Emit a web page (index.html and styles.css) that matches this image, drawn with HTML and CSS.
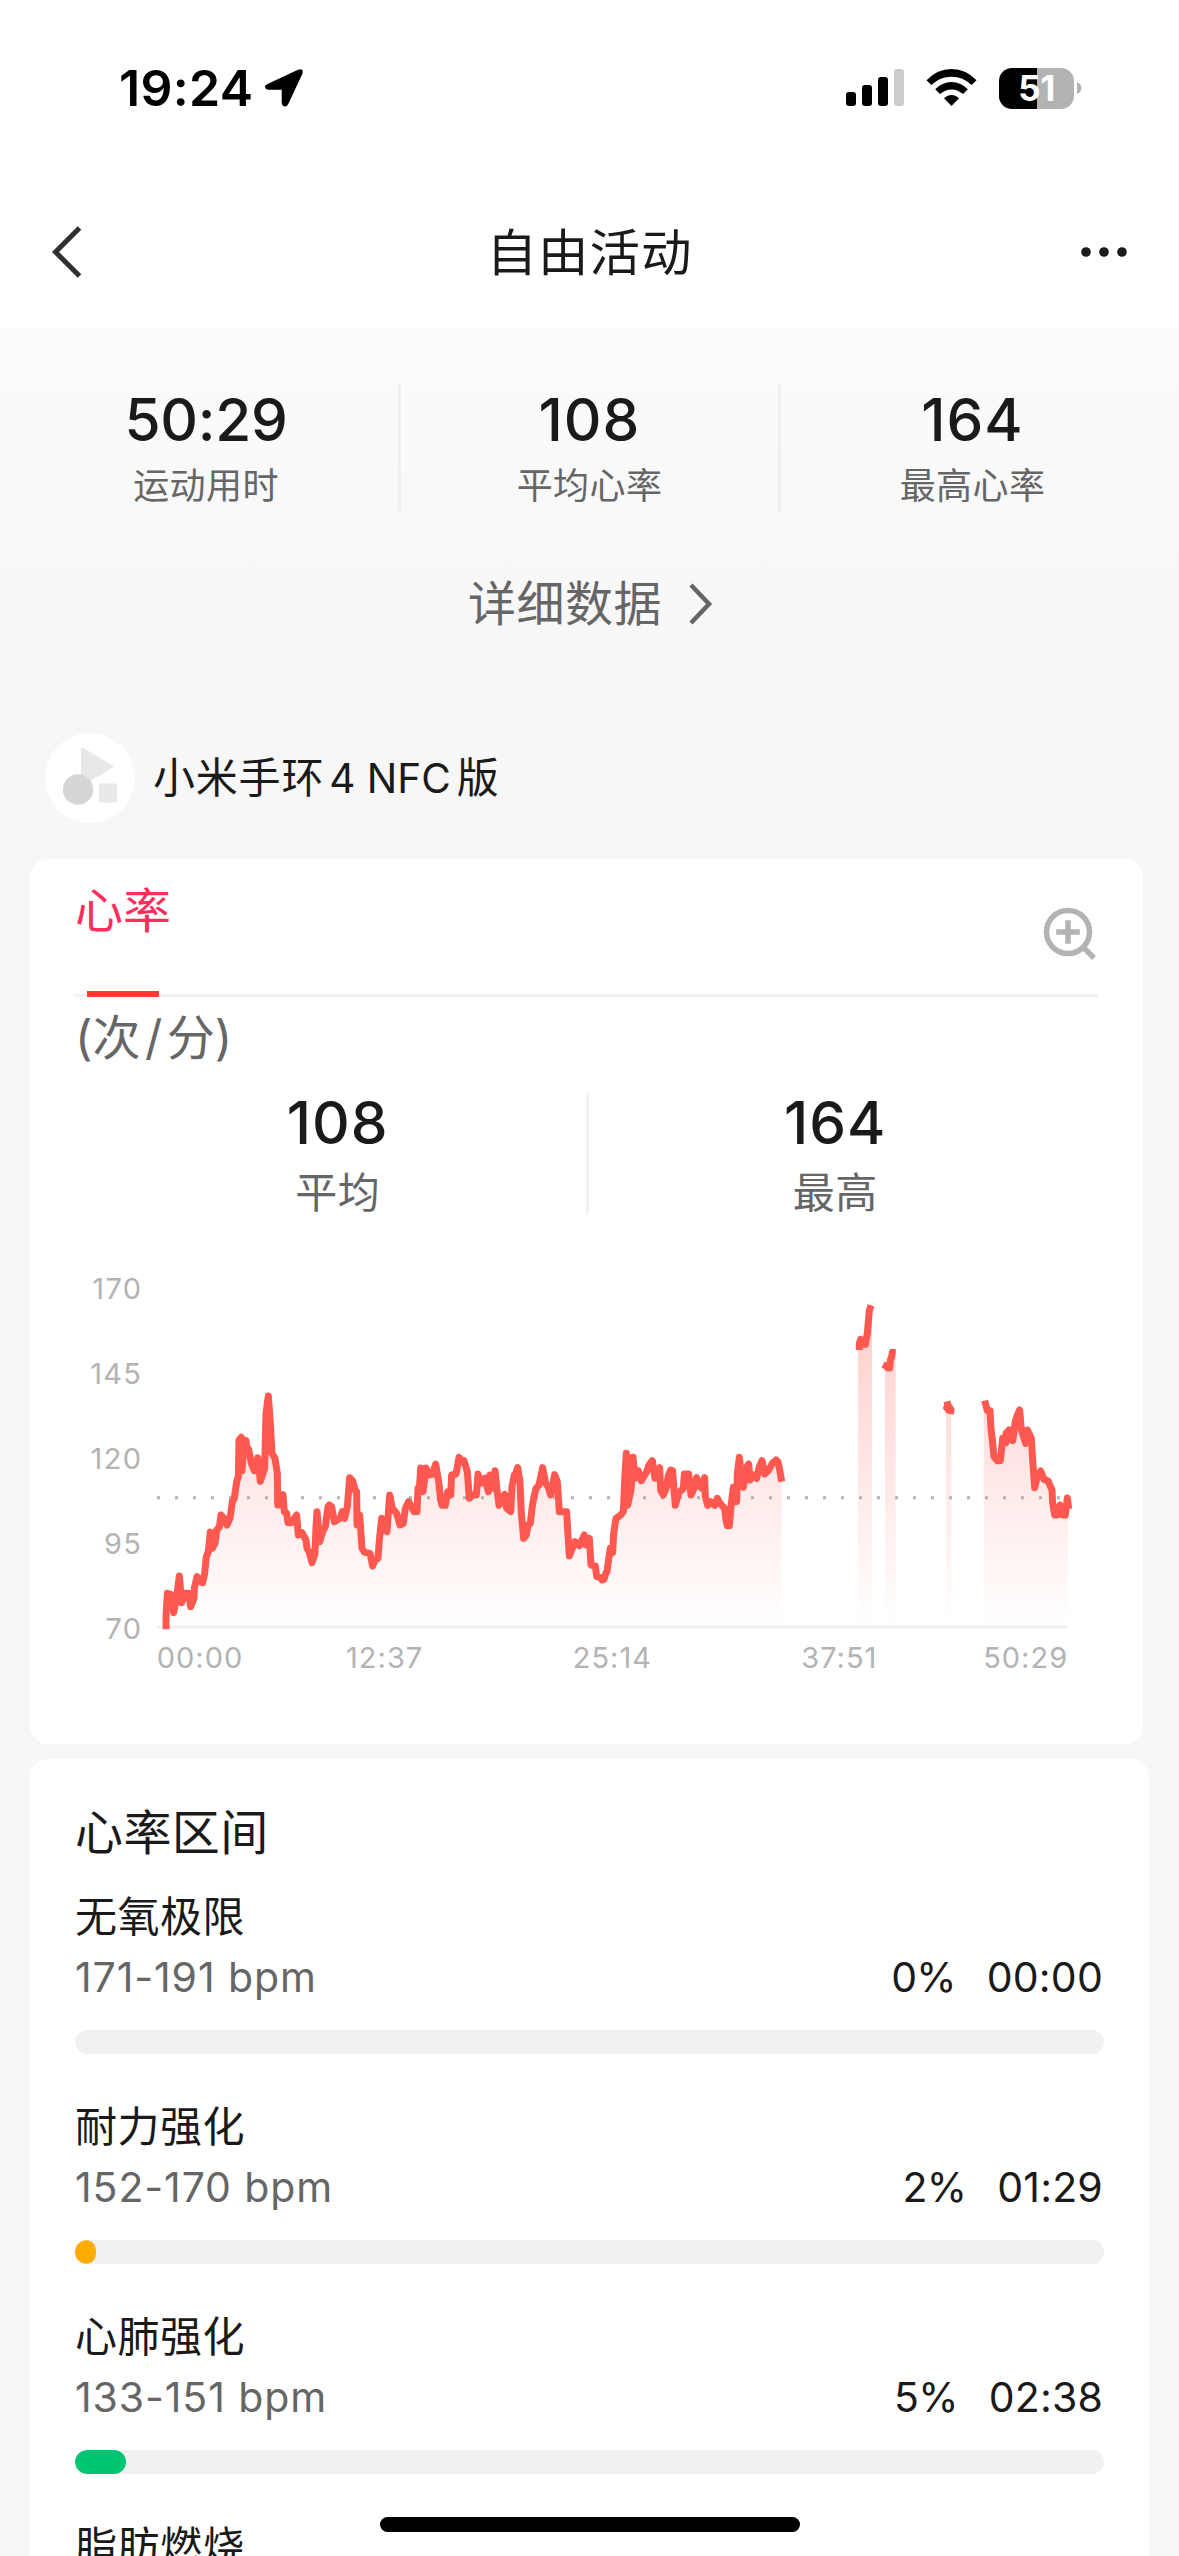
FILE: index.html
```html
<!DOCTYPE html>
<html lang="zh-CN">
<head>
<meta charset="utf-8">
<title>自由活动</title>
<link rel="stylesheet" href="styles.css">
</head>
<body>
<header class="top">
  <div class="statusbar">
    <div class="clock">
      <span class="clock-time">19:24</span>
      <svg class="location" width="40" height="40" viewBox="0 0 40 40"><path d="M3.5 16 34 1.8Q40.300-.5 38.300 6L24.500 35.500Q22.500 40 19.500 38Q17.700 37 17.700 34.500V21.700H4.500Q1.200 21.500 1 18.800Q1 17 3.500 16Z"/></svg>
    </div>
    <div class="indicators">
      <svg class="signal" width="58" height="38" viewBox="0 0 58 38"><rect x="0" y="23" width="10" height="14" rx="3"/><rect x="16" y="16" width="10" height="21" rx="3"/><rect x="32" y="8" width="10" height="29" rx="3"/><rect class="weak" x="48" y="0" width="10" height="37" rx="3"/></svg>
      <svg class="wifi" width="51" height="38" viewBox="0 0 51 38"><path d="M0.500 11.300Q11 .1 25.500 0Q40 .1 50.500 11.300L45.700 16Q37 7.800 25.500 7.700Q14 7.800 5.300 16Z"/><path d="M9.200 20.200Q16 13 25.500 12.900Q35 13 41.800 20.200L37 25Q32 20.500 25.500 20.400Q19 20.500 14 25Z"/><path d="M18 29.200Q21 26 25.500 25.900Q30 26 33 29.200L25.500 37Z"/></svg>
      <div class="battery"><span>51</span></div>
      <svg class="nub" width="5" height="14" viewBox="0 0 5 14"><path d="M0 1Q4.500 3 4.500 7T0 13Z"/></svg>
    </div>
  </div>
  <nav class="navbar">
    <svg class="back" width="32" height="54" viewBox="0 0 32 54"><path d="M28.500 3 4.500 27 28.500 51"/></svg>
    <h1>自由活动</h1>
    <svg class="more" width="48" height="12" viewBox="0 0 48 12"><circle cx="6" cy="6" r="4.800"/><circle cx="24" cy="6" r="4.800"/><circle cx="42" cy="6" r="4.800"/></svg>
  </nav>
</header>

<main>
  <section class="summary">
    <div class="stat"><b class="duration">50:29</b><span>运动用时</span></div>
    <div class="stat"><b>108</b><span>平均心率</span></div>
    <div class="stat"><b>164</b><span>最高心率</span></div>
  </section>

  <div class="detail">
    <span>详细数据</span>
    <svg width="24" height="44" viewBox="0 0 24 44"><path d="M2 3 20 22 2 41"/></svg>
  </div>

  <div class="device">
    <svg width="90" height="90" viewBox="0 0 90 90"><circle cx="45" cy="45" r="45" fill="#fff"/><path d="M37.500 16 66.500 33.500 37.500 51Z" fill="#e8e8e8" stroke="#e8e8e8" stroke-width="3" stroke-linejoin="round"/><circle cx="33" cy="56.500" r="15.200" fill="#d6d6d6"/><rect x="54" y="50.500" width="18" height="19" rx="1.500" fill="#e8e8e8"/></svg>
    <span class="device-name">小米手环<i>4 NFC</i>版</span>
  </div>

  <section class="card heart">
    <div class="tabs">
      <span class="tab">心率</span>
      <svg class="zoom" width="56" height="56" viewBox="0 0 56 56"><circle cx="27" cy="27" r="21.500"/><path d="M15.200 27H38.800M27 15.200V38.800M43 43 53 53"/></svg>
    </div>
    <p class="unit">(次<i>/</i>分)</p>
    <div class="pair">
      <div class="stat"><b>108</b><span>平均</span></div>
      <div class="stat"><b>164</b><span>最高</span></div>
    </div>
    <svg class="chart" width="1050" height="460" viewBox="0 0 3150 1380">
      <defs>
        <linearGradient id="fade" gradientUnits="userSpaceOnUse" x1="0" y1="150" x2="0" y2="1161">
          <stop offset="0" stop-color="#ff5850" stop-opacity=".31"/>
          <stop offset="1" stop-color="#ff5850" stop-opacity="0"/>
        </linearGradient>
      </defs>
      <g class="ylabels">
        <text x="247" y="176">170</text>
        <text x="247" y="431">145</text>
        <text x="247" y="686">120</text>
        <text x="247" y="941">95</text>
        <text x="247" y="1196">70</text>
      </g>
      <g class="xlabels">
        <text x="420" y="1283">00:00</text>
        <text x="974" y="1283">12:37</text>
        <text x="1657" y="1283">25:14</text>
        <text x="2338" y="1283">37:51</text>
        <text x="2897" y="1283">50:29</text>
      </g>
      <path class="axis" d="M291 1161H3024"/>
      <g id="areas" fill="url(#fade)"></g>
      <path class="average" d="M291 773H3024"/>
      <g id="lines" class="trace"></g>
    </svg>
  </section>

  <section class="card zones">
    <h2>心率区间</h2>
    <div class="zone">
      <h3>无氧极限</h3>
      <div class="zone-row"><span class="range">171-191 bpm</span><span class="share">0%</span><span class="time">00:00</span></div>
      <div class="bar"></div>
    </div>
    <div class="zone">
      <h3>耐力强化</h3>
      <div class="zone-row"><span class="range">152-170 bpm</span><span class="share">2%</span><span class="time">01:29</span></div>
      <div class="bar"><div class="fill amber" style="width:2%"></div></div>
    </div>
    <div class="zone">
      <h3>心肺强化</h3>
      <div class="zone-row"><span class="range">133-151 bpm</span><span class="share">5%</span><span class="time">02:38</span></div>
      <div class="bar"><div class="fill green" style="width:5%"></div></div>
    </div>
    <div class="zone">
      <h3>脂肪燃烧</h3>
    </div>
  </section>
</main>
<div class="home-indicator"></div>
<script src="chart.js"></script>
</body>
</html>
```
FILE: chart.js
```js
// Heart-rate runs: each is a list of x,y samples in chart units, split where the sensor lost contact.
const BASELINE = 1161;
const runs = [
  `318,1168 318,1130 322,1060 334,1064 341,1118 350,1070 358,1008 365,1088 374,1060 385,1060 392,1100 402,1075 403,1045 411,1010 420,1025 428,1028 434,1000 439,950 445,935 451,876 457,925 465,910 470,870 478,862 483,825 492,835 501,855 510,835 517,785 523,775 530,725 535,710 537,600 544,592 546,692 552,600 558,602 560,620 566,628 574,670 583,692 590,690 593,653 601,724 614,685 618,520 625,468 631,550 636,640 645,655 652,700 653,795 662,795 669,764 673,815 680,820 684,848 694,848 710,825 715,885 726,878 738,900 741,925 748,937 756,968 765,940 768,860 771,815 779,905 788,875 796,860 804,800 808,795 815,800 823,845 840,835 847,815 854,835 862,800 869,713 878,722 885,750 890,755 891,855 899,825 906,925 914,937 930,940 938,978 945,960 954,955 958,900 965,835 972,870 981,875 989,765 997,805 1010,820 1020,855 1030,850 1036,805 1046,785 1062,815 1071,815 1074,745 1079,735 1082,684 1089,755 1098,684 1106,705 1117,703 1127,672 1136,725 1142,780 1146,796 1156,796 1163,755 1172,765 1175,705 1188,702 1197,652 1206,665 1212,662 1222,695 1228,775 1238,765 1249,765 1254,702 1262,730 1275,715 1285,755 1290,705 1297,745 1305,692 1311,750 1317,796 1325,775 1334,763 1340,805 1352,815 1356,740 1363,705 1367,700 1373,683 1380,725 1384,820 1391,895 1399,885 1404,855 1411,850 1416,805 1422,770 1428,745 1437,735 1448,683 1457,730 1465,742 1472,765 1484,704 1492,725 1498,815 1520,815 1523,870 1528,948 1535,930 1545,905 1558,917 1573,885 1578,915 1588,895 1593,975 1606,978 1610,1010 1620,1012 1626,1020 1632,1018 1638,998 1641,995 1647,950 1651,925 1658,938 1661,880 1668,835 1682,825 1690,815 1695,700 1699,640 1703,796 1713,750 1719,652 1726,715 1735,692 1744,722 1760,695 1767,675 1777,662 1785,715 1799,683 1802,750 1810,765 1820,740 1824,710 1832,690 1838,692 1842,750 1846,796 1856,758 1870,745 1873,702 1886,702 1893,765 1902,745 1910,713 1920,740 1926,745 1934,713 1936,770 1943,796 1952,785 1964,796 1972,775 1980,790 1994,805 1998,840 2002,857 2008,857 2014,790 2020,742 2030,785 2032,700 2038,652 2043,695 2050,742 2058,685 2066,672 2070,720 2080,705 2090,715 2098,680 2106,662 2114,702 2125,692 2137,670 2148,660 2154,665 2160,695 2165,725`,
  `2398,330 2398,310 2402,298 2408,313 2416,313 2422,280 2428,212 2433,196`,
  `2469,374 2478,378 2484,384 2489,384 2491,360 2495,350 2497,337 2507,338`,
  `2661,484 2664,496 2660,503 2668,502 2666,510 2673,508 2671,522`,
  `2774,482 2782,512 2790,512 2793,565 2797,600 2802,650 2812,662 2821,662 2828,595 2838,608 2838,580 2847,570 2858,602 2865,550 2870,530 2879,510 2884,570 2897,610 2902,570 2914,595 2918,660 2924,743 2932,710 2942,693 2952,718 2964,723 2976,750 2978,790 2984,825 2992,825 3000,795 3008,825 3016,825 3022,774 3026,807`,
];
// Shaded column limits below each run.
const columns = [[318, 2165], [2394, 2436], [2475, 2507], [2658, 2674], [2771, 3024]];

const add = (id, d) => {
  const path = document.createElementNS('http://www.w3.org/2000/svg', 'path');
  path.setAttribute('d', d);
  document.getElementById(id).appendChild(path);
};
runs.forEach((points, i) => {
  const p = points.split(' ');
  const first = p[0].split(',')[1];
  const last = p[p.length - 1].split(',')[1];
  const [x1, x2] = columns[i];
  add('areas', `M${x1} ${BASELINE}V${first}L${p.join('L')}L${x2} ${last}V${BASELINE}Z`);
  add('lines', `M${p.join('L')}`);
});
```
FILE: styles.css
```css
* { box-sizing: border-box; margin: 0; padding: 0; }
html { height: 2556px; overflow: hidden; }
body {
  width: 1179px;
  height: 2556px;
  overflow: hidden;
  background: #f7f7f7;
  color: #1a1a1a;
  font-family: Inter, "Noto Sans CJK SC", sans-serif;
}
svg { display: block; flex: none; }
h1, h2, h3 { font-weight: 400; }
i { font-style: normal; }

.top { height: 327px; background: #fff; }
.statusbar {
  height: 176px;
  padding: 0 97px 0 119px;
  display: flex;
  align-items: center;
  justify-content: space-between;
}
.clock { display: flex; align-items: center; gap: 11px; }
.clock-time { font-size: 50px; font-weight: 600; line-height: 60px; letter-spacing: .3px; color: #000; }
.indicators { display: flex; align-items: center; }
.signal .weak { fill: #ccc; }
.wifi { margin-left: 22px; }
.battery {
  margin-left: 22px;
  width: 75px;
  height: 41px;
  border-radius: 13px;
  background: linear-gradient(90deg, #000 38px, #b3b3b3 38px);
  color: #fff;
  font-size: 35px;
  font-weight: 700;
  line-height: 41px;
  letter-spacing: -.5px;
  text-align: center;
}
.nub { margin-left: 3px; fill: #b3b3b3; }

.navbar {
  height: 151px;
  padding: 0 51px 0 51px;
  display: grid;
  grid-template-columns: 1fr auto 1fr;
  align-items: center;
}
.navbar h1 { padding-top: 3px; font-size: 50.500px; line-height: 60px; letter-spacing: 1px; }
.back { fill: none; stroke: #303033; stroke-width: 5; }
.more { justify-self: end; fill: #1a1a1a; }

main {
  height: 2229px;
  overflow: hidden;
  padding: 57px 30px 0;
  background: linear-gradient(#fbfbfb, #f7f7f7 320px);
}

.stat { display: flex; flex-direction: column; align-items: center; flex: 1; }
.stat b { font-size: 58.500px; font-weight: 500; line-height: 60px; letter-spacing: 1px; }
.stat .duration { letter-spacing: -.3px; }
.stat span { color: #666; line-height: 48px; letter-spacing: .4px; }

.summary {
  display: grid;
  grid-template-columns: 382px 380px 386px;
  height: 128px;
  margin: 0 -14px;
}
.summary .stat { padding-top: 6px; }
.summary .stat:first-child { padding-right: 2px; }
.summary .stat + .stat { border-left: 3px solid #f0f0f0; }
.summary span { margin-top: 12px; font-size: 36px; }

.detail {
  margin: 62px 0 0 2px;
  height: 60px;
  display: flex;
  align-items: center;
  justify-content: center;
  gap: 27px;
  color: #666;
  font-size: 48px;
  line-height: 60px;
  letter-spacing: .5px;
}
.detail svg { fill: none; stroke: #666; stroke-width: 4.500; }

.device { margin: 99px 0 36px 15px; display: flex; align-items: center; gap: 18px; }
.device-name { font-size: 42px; line-height: 60px; letter-spacing: .8px; }
.device-name i { margin: 0 6px 0 5px; font-size: 40.500px; letter-spacing: 0; }

.card { background: #fff; border-radius: 18px; }
.heart { width: 1113px; height: 885px; }
.tabs {
  position: relative;
  height: 138px;
  margin: 0 45px;
  padding: 22px 0 0;
  display: flex;
  justify-content: space-between;
  border-bottom: 3px solid #f1f1f1;
}
.tabs::after {
  content: "";
  position: absolute;
  left: 12px;
  bottom: -3px;
  width: 72px;
  height: 6px;
  background: #ff3b30;
}
.tab { color: #ff2d5c; font-size: 48px; line-height: 60px; }
.zoom { margin: 24px 1px 0 0; fill: none; stroke: #b3b3b3; stroke-width: 5.500; }
.unit { margin: 11px 45px 0; color: #666; font-size: 48px; line-height: 60px; }
.unit i { margin: 0 4.500px; }

.pair { display: flex; height: 120px; margin: 25px 59px 0 61px; }
.pair .stat { padding-right: 2px; }
.pair .stat:first-child { padding-right: 1px; }
.pair .stat + .stat { border-left: 3px solid #f0f0f0; }
.pair span { margin-top: 16px; font-size: 42px; }

.chart { margin: 27px 0 0 30px; font-size: 87px; letter-spacing: 4px; }
.chart text { fill: #b3b3b3; }
.ylabels { text-anchor: end; }
.xlabels { text-anchor: middle; letter-spacing: 3px; }
.axis { stroke: #f1f1f1; stroke-width: 9; }
.average { stroke: #b3b3b3; stroke-width: 9; stroke-dasharray: 9 45; }
.trace { fill: none; stroke: #ff5850; stroke-width: 21; stroke-linejoin: round; }

.zones { margin-top: 15px; width: 1119px; height: 900px; padding: 44px 45px 0; }
.zones h2 { margin-bottom: 29px; font-size: 48px; line-height: 60px; letter-spacing: .4px; }
.zone { height: 210px; }
.zone h3 { font-size: 42px; line-height: 50px; letter-spacing: .5px; }
.zone-row { display: flex; margin: 10px 1px 28px 0; font-size: 41px; line-height: 50px; letter-spacing: .2px; }
.range { flex: 1; color: #666; letter-spacing: .9px; }
.share { letter-spacing: -.8px; }
.time { margin-left: 31px; }
.bar { height: 23.500px; border-radius: 12px; background: #f1f1f1; overflow: hidden; }
.fill { height: 100%; border-radius: 12px; }
.amber { background: #ffab00; }
.green { background: #00c673; }

.home-indicator {
  position: absolute;
  left: 380px;
  top: 2517px;
  width: 420px;
  height: 15px;
  border-radius: 8px;
  background: #000;
}
```
